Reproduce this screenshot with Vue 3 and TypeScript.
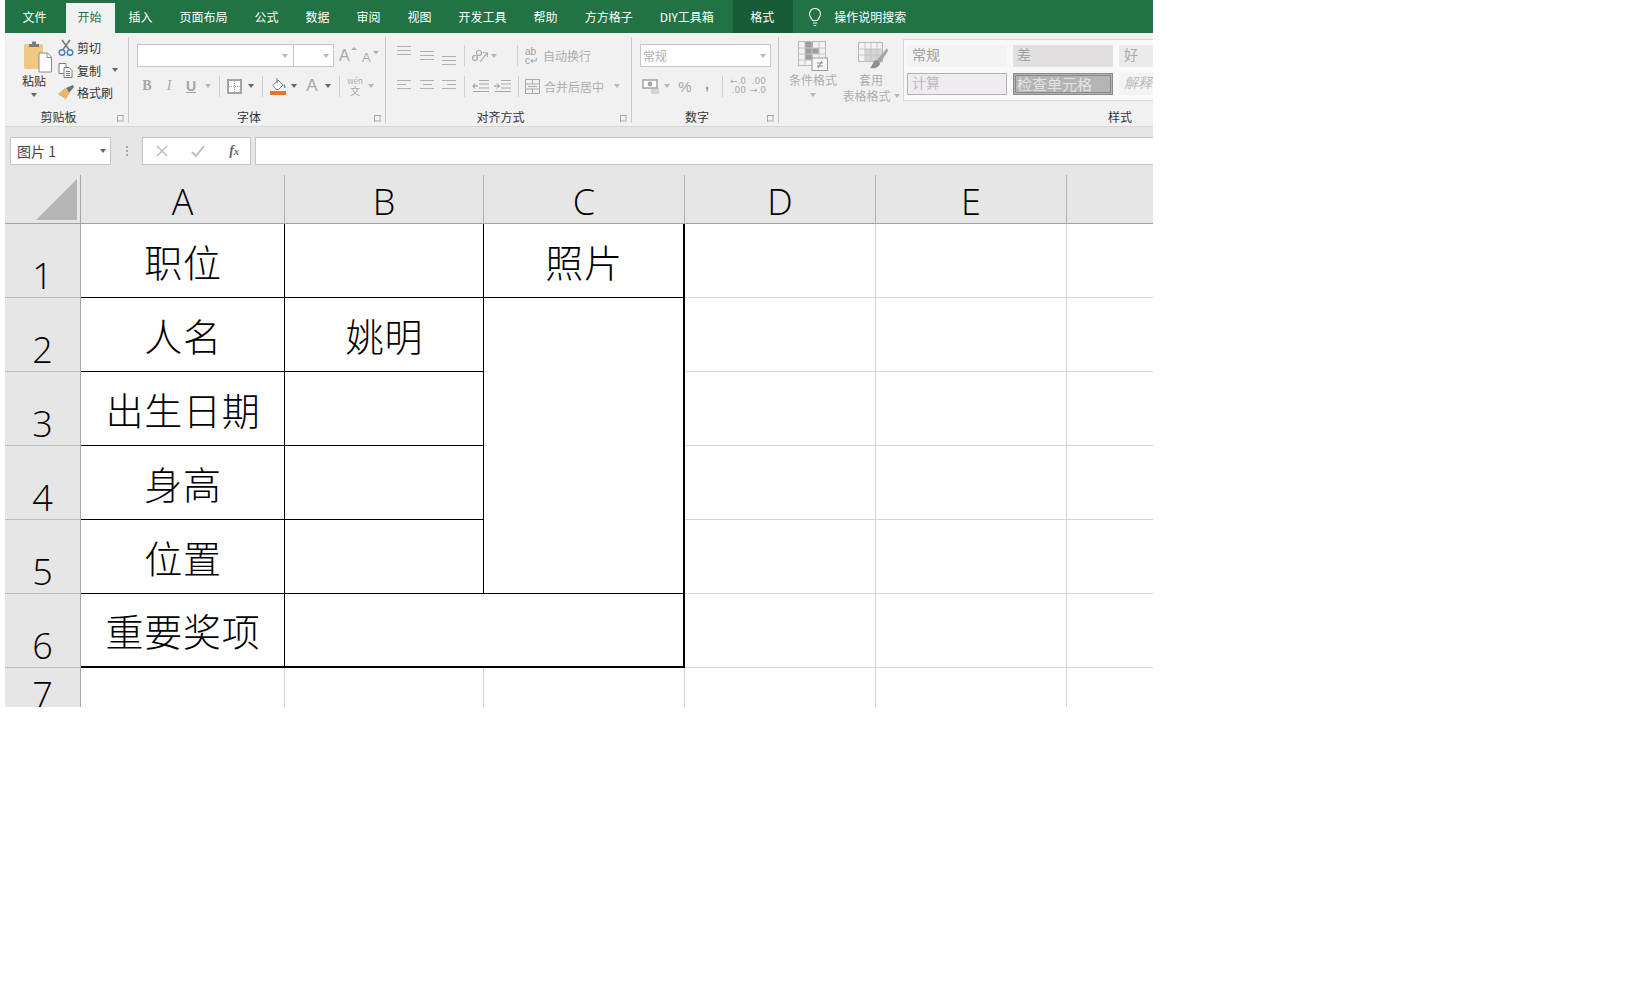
<script setup lang="ts">
interface Cell { t?: string; cls?: string }
const tabs = ['插入', '页面布局', '公式', '数据', '审阅', '视图', '开发工具', '帮助', '方方格子', 'DIY工具箱']
const cols = ['A', 'B', 'C', 'D', 'E', '']
const blank: Cell[] = [{ cls: 'g' }, { cls: 'g' }, { cls: 'g' }]
const rows: { n: number; cells: Cell[] }[] = [
  { n: 1, cells: [{ t: '职位', cls: 'k' }, { cls: 'k' }, { t: '照片', cls: 'k tr' }, ...blank] },
  { n: 2, cells: [{ t: '人名', cls: 'k' }, { t: '姚明', cls: 'k' }, { cls: 'k tr rs4' }, ...blank] },
  { n: 3, cells: [{ t: '出生日期', cls: 'k' }, { cls: 'k' }, ...blank] },
  { n: 4, cells: [{ t: '身高', cls: 'k' }, { cls: 'k' }, ...blank] },
  { n: 5, cells: [{ t: '位置', cls: 'k' }, { cls: 'k' }, ...blank] },
  { n: 6, cells: [{ t: '重要奖项', cls: 'k tb' }, { cls: 'k tr tb cs2' }, ...blank] },
  { n: 7, cells: [{ cls: 'g' }, { cls: 'g' }, { cls: 'g' }, ...blank] }
]
</script>

<template>
  <div class="app">
    <div class="tabs">
      <div class="tab file">文件</div>
      <div class="tab active">开始</div>
      <div v-for="t in tabs" :key="t" class="tab">{{ t }}</div>
      <div class="tab ctx">格式</div>
      <div class="search">
        <svg width="14" height="19" viewBox="0 0 14 19" fill="none" stroke="#fff" stroke-width="1.1">
          <path d="M4.5 12.5C4.2 10.5 1.5 9.5 1.5 6a5.5 5.5 0 0 1 11 0c0 3.500-2.700 4.500-3 6.500z" />
          <path d="M5 15h4M5.800 17.500h2.400" />
        </svg>
        <span>操作说明搜索</span>
      </div>
    </div>

    <div class="ribbon">
      <section class="grp g-clip">
        <div class="body clip-body">
          <div class="paste">
            <svg width="30" height="33" viewBox="0 0 30 33">
              <rect x="0" y="4" width="19" height="25" rx="2" fill="#f0c87f" />
              <path d="M5 7V4h3V1.500h4V4h3v3z" fill="#7b7b7b" />
              <path d="M15 13h8.500l4 4v15H15z" fill="#fff" stroke="#8c8c8c" />
              <path d="M23 13v4.500h4.500" fill="none" stroke="#8c8c8c" />
            </svg>
            <span class="dk">粘贴</span>
            <i class="caret dkc" />
          </div>
          <div class="clip-col">
            <div class="clip-row">
              <svg width="16" height="18" viewBox="0 0 16 18" fill="none">
                <path d="M5 10.500 12 1M11 10.500 4 1" stroke="#7a7a7a" stroke-width="1.600" />
                <circle cx="4" cy="13.500" r="2.800" stroke="#3f7fc1" stroke-width="1.400" />
                <circle cx="12" cy="13.500" r="2.800" stroke="#3f7fc1" stroke-width="1.400" />
              </svg>
              <span class="dk">剪切</span>
            </div>
            <div class="clip-row">
              <svg width="16" height="16" viewBox="0 0 16 16" fill="#fff" stroke="#7a7a7a">
                <path d="M1 1.500h7v10H1z" />
                <path d="M6 5.500h5l3 3v7H6z" />
                <path d="M8 9.500h4M8 11.500h4M8 13.500h4" stroke="#3f7fc1" />
              </svg>
              <span class="dk">复制</span>
              <i class="caret dkc copy-caret" />
            </div>
            <div class="clip-row">
              <svg width="16" height="16" viewBox="0 0 16 16">
                <path d="M8 3 15 0l1 2-5 6z" fill="#6f6f6f" />
                <path d="M0 9l7-6 5 5-5 7-1-3-2 1 0-2-2 0z" fill="#e4b76a" />
              </svg>
              <span class="dk">格式刷</span>
            </div>
          </div>
        </div>
        <div class="label"><span>剪贴板</span><i class="launcher" /></div>
      </section>

      <section class="grp g-font">
        <div class="body pad8">
          <div class="row1 font-row1">
            <div class="combo fname"><i class="caret lt" /></div>
            <div class="combo fsize"><i class="caret lt" /></div>
            <span class="big-a a1">A<i class="up" /></span>
            <span class="big-a a2">A<i class="down" /></span>
          </div>
          <div class="row2 font-row2">
            <b class="tool serif">B</b>
            <i class="tool serif">I</i>
            <u class="tool">U</u>
            <i class="caret lt" />
            <i class="sep" />
            <svg width="15" height="15" viewBox="0 0 15 15" fill="#fff" stroke="#a3a3a3">
              <rect x="1" y="1" width="13" height="13" stroke-width="2" />
              <path d="M7.500 2v11M2 7.500h11" stroke-dasharray="1 1" />
            </svg>
            <i class="caret dkc" />
            <i class="sep" />
            <svg width="17" height="18" viewBox="0 0 17 18">
              <path d="M3 8.500 8 3l5 5-4.500 4.500H6z" fill="#fff" stroke="#7d7d7d" />
              <path d="M7 1v5" stroke="#7d7d7d" />
              <path d="M14 7c1.500 1.500 2 3 1 4-1 0-1.500-1.500-1-4z" fill="#3f7fc1" />
              <rect x="0" y="14" width="16" height="4" fill="#e8742f" />
            </svg>
            <i class="caret dkc" />
            <span class="big-a a-color">A</span>
            <i class="caret dkc" />
            <i class="sep" />
            <span class="wen"><span>wén</span><span>文</span></span>
            <i class="caret lt" />
          </div>
        </div>
        <div class="label"><span>字体</span><i class="launcher" /></div>
      </section>

      <section class="grp g-align">
        <div class="body pad8">
          <div class="row1 align-row1">
            <i class="lines top" />
            <i class="lines mid" />
            <i class="lines bot" />
            <i class="sep" />
            <svg width="18" height="16" viewBox="0 0 18 16" fill="none" stroke="#a9a9a9" stroke-width="1.200">
              <circle cx="4" cy="10" r="2.500" />
              <circle cx="8" cy="5" r="2.500" />
              <path d="M9 14 16 5M12 4.500l4.500.5-.5 4" />
            </svg>
            <i class="caret lt" />
            <i class="sep sep-end" />
            <div class="wide">
              <span class="ab"><span>ab</span><span>c↵</span></span>
              <span class="muted">自动换行</span>
            </div>
          </div>
          <div class="row2 align-row2">
            <i class="lines ll" />
            <i class="lines lc" />
            <i class="lines lr" />
            <i class="sep" />
            <svg width="17" height="14" viewBox="0 0 17 14" fill="none" stroke="#a9a9a9">
              <path d="M7 1.500h10M7 5h10M7 9h10M1 12.500h16" />
              <path d="M6 7H1M3 4.500 .8 7 3 9.500" stroke="#8f8f8f" />
            </svg>
            <svg width="17" height="14" viewBox="0 0 17 14" fill="none" stroke="#a9a9a9">
              <path d="M7 1.500h10M7 5h10M7 9h10M1 12.500h16" />
              <path d="M0 7h5M3 4.500 5.500 7 3 9.500" stroke="#8f8f8f" />
            </svg>
            <i class="sep sep-end" />
            <div class="wide merge">
              <svg width="15" height="15" viewBox="0 0 15 15" fill="none" stroke="#a9a9a9">
                <rect x=".5" y=".5" width="14" height="14" />
                <path d="M.5 5h14M.5 10h14M7.500 .5V5M7.500 10v4.500M3 7.500h9" />
              </svg>
              <span class="muted">合并后居中</span>
              <i class="caret lt merge-caret" />
            </div>
          </div>
        </div>
        <div class="label"><span>对齐方式</span><i class="launcher" /></div>
      </section>

      <section class="grp g-num">
        <div class="body pad8">
          <div class="row1">
            <div class="combo numfmt"><span class="muted">常规</span><i class="caret lt" /></div>
          </div>
          <div class="row2 num-row2">
            <svg width="18" height="15" viewBox="0 0 18 15">
              <rect x="1" y="1" width="14" height="8" fill="#fff" stroke="#a3a3a3" stroke-width="1.500" />
              <circle cx="8" cy="5" r="2.400" fill="#a3a3a3" />
              <path d="M9 10h8M9 12h8M9 14h8" stroke="#b5b5b5" />
            </svg>
            <i class="caret lt" />
            <span class="pct">%</span>
            <b class="comma">,</b>
            <i class="sep" />
            <span class="dec"><span>←.0</span><span>.00</span></span>
            <span class="dec"><span>.00</span><span>→.0</span></span>
          </div>
        </div>
        <div class="label"><span>数字</span><i class="launcher" /></div>
      </section>

      <section class="grp g-style">
        <div class="body style-body">
          <div class="big-btn cond">
            <svg width="30" height="30" viewBox="0 0 30 30">
              <rect x=".5" y=".5" width="27" height="24" fill="#f3f3f3" stroke="#b9b9b9" />
              <path d="M7 1h8v6h6v6h-6v6H7z" fill="#9d9d9d" />
              <path d="M7 1v24M14 1v24M21 1v24M1 7h27M1 13h27M1 19h27" stroke="#c6c6c6" />
              <rect x="14" y="17" width="15.500" height="12.500" fill="#f7f7f7" stroke="#9c9c9c" />
              <path d="M19 22h6M19 25h6M24 20l-4 7" stroke="#8a8a8a" fill="none" />
            </svg>
            <span class="muted">条件格式</span>
            <i class="caret lt" />
          </div>
          <div class="big-btn tbl">
            <svg width="30" height="28" viewBox="0 0 30 28">
              <rect x=".5" y=".5" width="24" height="19" fill="#f3f3f3" stroke="#b9b9b9" />
              <rect x="7" y="7" width="17" height="12" fill="#d5d3d4" />
              <path d="M7 1v19M13 1v19M19 1v19M1 7h24M1 13h24" stroke="#c6c6c6" />
              <path d="M29 6 19 18l3 3L30 9z" fill="#a5a5a5" />
              <path d="M19 18c-4 0-4 5-7 8 5 1 10-1 10-5z" fill="#8e8e8e" />
            </svg>
            <span class="muted">套用</span>
            <span class="muted tbl-line">表格格式<i class="caret lt" /></span>
          </div>
          <div class="gallery">
            <div class="st s-normal">常规</div>
            <div class="st s-bad">差</div>
            <div class="st s-good">好</div>
            <div class="st s-calc">计算</div>
            <div class="st s-check">检查单元格</div>
            <div class="st s-note">解释</div>
          </div>
        </div>
        <div class="label"><span>样式</span><i class="launcher" /></div>
      </section>
    </div>

    <div class="fbar">
      <div class="namebox"><span>图片 1</span><i class="caret dkc" /></div>
      <div class="grip"><i /><i /><i /></div>
      <div class="fxbox">
        <svg width="14" height="14" viewBox="0 0 14 14" fill="none" stroke="#bdbdbd" stroke-width="1.500">
          <path d="M2 2 12 12M12 2 2 12" />
        </svg>
        <svg class="ok" width="14" height="14" viewBox="0 0 14 14" fill="none" stroke="#bdbdbd" stroke-width="2">
          <path d="M1 8l4 4 8-10" />
        </svg>
        <span class="fx">f<small>x</small></span>
      </div>
      <div class="finput" />
    </div>
    <div class="strip" />

    <div class="sheet">
      <div class="corner"><i /></div>
      <div v-for="(c, i) in cols" :key="i" class="colh">{{ c }}</div>
      <template v-for="r in rows" :key="r.n">
        <div class="rowh">{{ r.n }}</div>
        <div v-for="(c, i) in r.cells" :key="i" class="cell" :class="c.cls">{{ c.t }}</div>
      </template>
    </div>
  </div>
</template>

<style scoped>
.app {
  width: 1148px;
  height: 707px;
  margin-left: 5px;
  overflow: hidden;
  font-family: "Noto Sans CJK SC", "Noto Sans", sans-serif;
  font-size: 12px;
  background: #fff;
}
i { font-style: normal; display: block; }

.tabs { height: 33px; background: #217346; display: flex; color: #fff; line-height: 33px; }
.tab { padding: 0 13.5px; white-space: nowrap; }
.tab.file { width: 61px; box-sizing: border-box; text-align: center; padding: 0 2px 0 0; }
.tab.active { width: 49px; box-sizing: border-box; padding: 0 2px 0 0; text-align: center; margin-top: 3px; height: 30px; line-height: 27px; background: #f1f1f1; color: #217346; }
.tab.ctx { width: 60px; box-sizing: border-box; padding: 0 2px 0 0; margin-left: 6px; text-align: center; background: #185c37; }
.search { display: flex; align-items: center; gap: 12px; margin-left: 15px; }
.search svg { margin-top: 2px; }

.ribbon { height: 94px; box-sizing: border-box; padding: 4px 0 3px; background: #f1f1f1; border-bottom: 1px solid #d3d8d5; display: flex; overflow: hidden; color: #444; }
.grp { flex: none; display: flex; flex-direction: column; border-right: 1px solid #c8c8c8; box-sizing: border-box; }
.g-clip { width: 124px; }
.g-font { width: 257px; }
.g-align { width: 246px; }
.g-num { width: 147px; }
.g-style { width: 698px; border-right: 0; }
.body { flex: 1; min-height: 0; }
.pad8 { padding-left: 8px; }
.label { height: 12px; line-height: 12px; display: flex; align-items: center; color: #333; }
.label span { flex: 1; text-align: center; }
.launcher { width: 16px; height: 8px; flex: none; margin-top: 3px; }
.launcher::before { content: ""; display: block; width: 7px; height: 7px; margin-left: 5px; border-left: 1px solid #a8a8a8; border-top: 1px solid #a8a8a8; box-sizing: border-box; box-shadow: inset -2px -2px 0 #cfcfcf; }

.caret { width: 0; height: 0; border-left: 3.500px solid transparent; border-right: 3.500px solid transparent; border-top: 4px solid #b8b8b8; }
.caret.dkc { border-top-color: #666; }
.dk { color: #333; }
.muted { color: #aeaeae; white-space: nowrap; }

.clip-body { display: flex; }
.paste { width: 48px; margin-left: 5px; padding-top: 3px; display: flex; flex-direction: column; align-items: center; }
.paste svg { margin-left: 9px; }
.paste span { line-height: 15px; }
.paste .caret { margin-top: 5px; }
.clip-col { display: grid; grid-template-rows: repeat(3, 21px); row-gap: 1.500px; }
.clip-row { display: flex; align-items: center; gap: 3px; }
.clip-row svg { width: 16px; flex: none; }
.copy-caret { margin-left: 8px; }

.row1 { margin-top: 7px; height: 23px; display: flex; }
.row2 { margin-top: 8px; height: 22px; display: grid; align-items: center; justify-items: center; }
.sep { width: 1px; height: 21px; background: #d0d0d0; }
.sep-end { justify-self: end; }

.combo { height: 23px; box-sizing: border-box; background: #fff; border: 1px solid #c3c8c5; display: flex; align-items: center; justify-content: flex-end; padding-right: 5px; }
.fname { width: 157px; }
.fsize { width: 40px; border-left: 0; padding-right: 4px; }
.big-a { color: #aaa; font-family: "Liberation Sans", sans-serif; position: relative; display: block; }
.a1 { font-size: 16px; margin: 3px 0 0 5px; width: 20px; }
.a2 { font-size: 13px; margin: 6px 0 0 3px; width: 20px; }
.up, .down { position: absolute; top: 0; right: 2px; width: 0; height: 0; border-left: 3px solid transparent; border-right: 3px solid transparent; }
.up { border-bottom: 3px solid #aaa; }
.down { border-top: 3px solid #aaa; top: 1px; right: 3px; }
.font-row2 { grid-template-columns: 20px 24px 20px 14px 9px 20px 14px 9px 22px 10px 26px 6px 17px 14px 18px; }
.tool { color: #a5a5a5; font-size: 14px; font-family: "Liberation Sans", sans-serif; font-weight: 700; }
.serif { font-family: "Liberation Serif", serif; }
i.tool { font-style: italic; font-weight: 400; color: #aaa; }
.a-color { font-size: 17px; }
.wen { display: flex; flex-direction: column; align-items: center; color: #aaa; font-size: 8px; line-height: 10px; }
.wen span:last-child { font-size: 10px; }

.align-row1 { display: grid; grid-template-columns: 20px 26px 18px 13px 18px 10px 19px auto; align-items: center; justify-items: center; height: 23px; }
.align-row2 { grid-template-columns: 20px 26px 18px 13px 18px 26px 4px auto; }
.lines { width: 14px; height: 19px; display: block; background-repeat: no-repeat; }
.lines { background-image: linear-gradient(#b0b0b0, #b0b0b0), linear-gradient(#b0b0b0, #b0b0b0), linear-gradient(#b0b0b0, #b0b0b0); background-size: 14px 1px, 14px 1px, 14px 1px; }
.top { background-position: 0 0, 0 4px, 0 8px; }
.mid { background-position: 0 5px, 0 9px, 0 13px; }
.bot { background-position: 0 10px, 0 14px, 0 18px; }
.ll { background-size: 14px 1px, 9px 1px, 14px 1px; background-position: 0 3px, 0 7px, 0 11px; }
.lc { background-size: 14px 1px, 9px 1px, 14px 1px; background-position: 0 3px, 2.500px 7px, 0 11px; }
.lr { background-size: 14px 1px, 9px 1px, 14px 1px; background-position: 0 3px, 5px 7px, 0 11px; }
.wide { display: flex; align-items: center; justify-self: start; }
.ab { width: 14px; margin-left: 7px; margin-right: 4px; display: flex; flex-direction: column; color: #9e9e9e; font-size: 10px; line-height: 9px; font-family: "Liberation Sans", sans-serif; white-space: nowrap; }
.merge { margin-left: 6px; gap: 4px; }
.merge-caret { margin-left: 6px; }

.numfmt { width: 131px; justify-content: space-between; padding: 0 4px 0 2px; }
.num-row2 { grid-template-columns: 22px 10px 26px 18px 13px 18px 22px; }
.pct { color: #a5a5a5; font-size: 15px; font-family: "Liberation Sans", sans-serif; }
.comma { color: #8f8f8f; font-size: 14px; margin-top: -4px; font-family: "Liberation Sans", sans-serif; }
.dec { display: flex; flex-direction: column; align-items: flex-end; color: #a8a8a8; font-size: 9px; line-height: 9px; font-family: "DejaVu Sans", sans-serif; white-space: nowrap; }

.style-body { display: flex; align-items: flex-start; }
.big-btn { flex: none; display: flex; flex-direction: column; align-items: center; padding-top: 4px; }
.big-btn span { line-height: 16px; }
.big-btn svg { height: 30px; display: block; margin-bottom: 1px; }
.cond { width: 48px; margin-left: 10px; }
.cond .caret { margin-top: 5px; }
.tbl { width: 60px; margin-left: 4px; }
.tbl svg { margin-left: 4px; }
.tbl-line { display: flex; align-items: center; gap: 3px; margin-left: 0; line-height: 15px !important; }
.gallery { margin: 2px 0 0 2px; width: 320px; height: 62px; box-sizing: border-box; padding: 5px 3px; background: #f9f9f9; border: 1px solid #d6d6d6; display: grid; grid-template-columns: repeat(3, 100px); grid-template-rows: 22px 22px; gap: 6px; font-size: 14px; color: #aaa; }
.st { line-height: 19px; padding-left: 5px; box-sizing: border-box; white-space: nowrap; overflow: hidden; }
.s-normal { background: #f3f3f3; color: #9f9f9f; }
.s-bad { background: #e2dfe0; padding-left: 4px; color: #a3a3a3; }
.s-good { background: #ecebeb; }
.s-calc { background: #efebf0; border: 1px solid #b2b2b2; line-height: 17px; padding-left: 4px; color: #bbb; }
.s-check { background: #b5b3b4; border: 3px double #8a8a8a; color: #e4e4e4; line-height: 15px; padding-left: 1px; font-size: 15px; }
.s-note { background: #f3f3f3; font-style: italic; color: #bdbdbd; }

.fbar { height: 38px; box-sizing: border-box; padding-top: 10px; background: #e6e6e6; display: flex; align-items: stretch; }
.namebox { width: 101px; margin-left: 5px; box-sizing: border-box; background: #fff; border: 1px solid #c6c6c6; display: flex; align-items: center; justify-content: space-between; padding: 0 4px 0 6px; font-size: 14px; color: #444; }
.grip { width: 31px; display: flex; flex-direction: column; align-items: center; justify-content: center; gap: 2px; }
.grip i { width: 2px; height: 2px; background: #a8a8a8; }
.fxbox { width: 109px; box-sizing: border-box; background: #fff; border: 1px solid #c6c6c6; display: flex; align-items: center; justify-content: space-between; padding: 0 11px 0 12px; }
.ok { margin-left: -3px; }
.fx { font-family: "Liberation Serif", serif; font-style: italic; font-weight: 700; font-size: 14px; color: #666; }
.fx small { font-size: 10px; }
.finput { flex: 1; margin-left: 4px; box-sizing: border-box; background: #fff; border: 1px solid #c6c6c6; border-right: 0; }
.strip { height: 10px; background: #e6e6e6; }

.sheet { display: grid; grid-template-columns: 76px 204px 199px 201px 191px 191px 90px; grid-template-rows: 49px repeat(6, 74px) 49px; background: #fff; }
.corner { background: #e6e6e6; border-right: 1px solid #a8a8a8; border-bottom: 1px solid #a0a0a0; box-sizing: border-box; position: relative; }
.corner i { position: absolute; left: 31px; top: 4px; width: 41px; height: 41px; background: #b4b4b4; clip-path: polygon(100% 0, 100% 100%, 0 100%); }
.colh { background: #e6e6e6; border-right: 1px solid #b4b4b4; border-bottom: 1px solid #a0a0a0; box-sizing: border-box; text-align: center; font: 300 36px/54px "Open Sans", "Noto Sans", sans-serif; color: #000; }
.rowh { background: #e6e6e6; border-right: 1px solid #a8a8a8; border-bottom: 1px solid #bdbdbd; box-sizing: border-box; display: flex; align-items: flex-end; justify-content: center; padding-bottom: 3px; font: 300 36px/36px "Open Sans", "Noto Sans", sans-serif; color: #000; }
.cell { box-sizing: border-box; display: flex; align-items: center; justify-content: center; padding: 0 0 1px 1px; font-size: 38px; font-weight: 300; letter-spacing: .7px; color: #000; white-space: nowrap; }
.g { border-right: 1px solid #d4d4d4; border-bottom: 1px solid #d4d4d4; }
.k { border-right: 1px solid #000; border-bottom: 1px solid #000; }
.tr { border-right: 2px solid #000; }
.tb { border-bottom: 2px solid #000; }
.rs4 { grid-row: span 4; }
.cs2 { grid-column: span 2; }
</style>
